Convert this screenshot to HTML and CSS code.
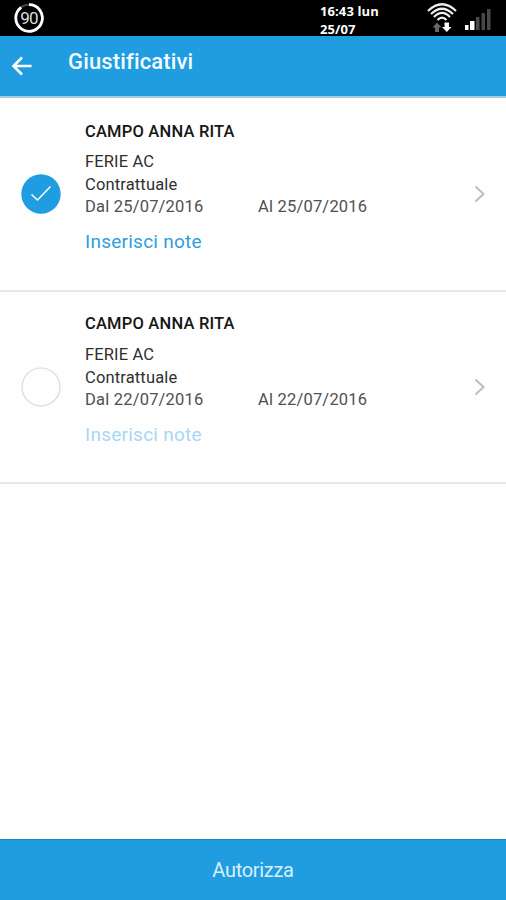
FILE: index.html
```html
<!DOCTYPE html>
<html lang="it">
<head>
<meta charset="utf-8">
<title>Giustificativi</title>
<link rel="stylesheet" href="styles.css">
</head>
<body>
<div class="status">
  <div class="battery">
    <svg width="32" height="36" viewBox="0 0 32 36" fill="none"><circle cx="16" cy="18" r="13.3" stroke="#444" stroke-width="2"/><path d="M16 4.7A13.3 13.3 0 1 1 8.2 7.3" stroke="#fff" stroke-width="2.8"/></svg>
    <span class="level">90</span>
  </div>
  <div class="clock">16:43 lun<br>25/07</div>
  <svg class="wifi" width="32" height="36" viewBox="0 0 32 36" fill="none"><g stroke="#eee" stroke-width="2.2"><path d="M2 11Q16-2.500 30 11"/><path d="M5 14Q16 3.500 27 14"/><path d="M8 17Q16 9 24 17"/><path d="M11.500 20Q16 15.500 20.500 20"/></g><path d="M11 22.500l4.500 5H13V32H9v-4.500H6.500z" fill="#666"/><path d="M18.500 22.500h4.500v4.500h2.500L20.800 32 16 27h2.500z" fill="#fff"/></svg>
  <svg class="signal" width="28" height="36" viewBox="0 0 28 36"><path d="M1 25h3.500v5H1zM6 21h4.500v9H6z" fill="#fff"/><path d="M12 17h3.500v13H12zM17.500 13H21v17h-3.500zM23 9h3.500v21H23z" fill="#484848"/></svg>
</div>
<header class="header">
  <svg class="back" width="22" height="22" viewBox="0 0 22 22" fill="none" stroke="#fff" stroke-width="2.600"><path d="M20.500 11H2.500M11 2.500L2.500 11l8.500 8.500"/></svg>
  <h1 class="title">Giustificativi</h1>
</header>
<main class="list">
  <section class="row">
    <svg class="check" width="40" height="40" viewBox="0 0 40 40" fill="none"><circle cx="20" cy="20" r="19.700" fill="#1f9de0"/><path d="M10.500 20.500L16.500 26 29.500 12.500" stroke="#fff" stroke-width="1.500"/></svg>
    <div class="info">
      <div class="name">CAMPO ANNA RITA</div>
      <div class="line type">FERIE AC</div>
      <div class="line kind">Contrattuale</div>
      <div class="line dates"><span class="from">Dal 25/07/2016</span><span>Al 25/07/2016</span></div>
      <div class="note">Inserisci note</div>
    </div>
    <svg class="chevron" width="12" height="18" viewBox="0 0 12 18" fill="none" stroke="#bdbdbd" stroke-width="2"><path d="M1.500 1.500L9.500 9l-8 7.500"/></svg>
  </section>
  <section class="row last">
    <svg class="check" width="40" height="40" viewBox="0 0 40 40" fill="none"><circle cx="20" cy="20" r="19" stroke="#d9d9d9" stroke-width="1.200"/></svg>
    <div class="info">
      <div class="name">CAMPO ANNA RITA</div>
      <div class="line type">FERIE AC</div>
      <div class="line kind">Contrattuale</div>
      <div class="line dates"><span class="from">Dal 22/07/2016</span><span>Al 22/07/2016</span></div>
      <div class="note disabled">Inserisci note</div>
    </div>
    <svg class="chevron" width="12" height="18" viewBox="0 0 12 18" fill="none" stroke="#bdbdbd" stroke-width="2"><path d="M1.500 1.500L9.500 9l-8 7.500"/></svg>
  </section>
</main>
<footer class="action">Autorizza</footer>
</body>
</html>
```
FILE: styles.css
```css
* { box-sizing: border-box; }
body {
  margin: 0;
  height: 900px;
  display: flex;
  flex-direction: column;
  background: #fefefe;
  font-family: Roboto, "Liberation Sans", sans-serif;
  overflow: hidden;
}
svg { display: block; flex: none; }
.status {
  flex: none;
  height: 36px;
  padding-left: 13px;
  display: flex;
  background: #000;
  color: #fff;
}
.battery { display: grid; width: 32px; margin-right: 275px; }
.battery > * { grid-area: 1 / 1; }
.level {
  place-self: center;
  font-size: 17px;
  letter-spacing: -0.8px;
  color: #ddd;
}
.clock {
  width: 106px;
  padding-top: 2px;
  font: 700 13px/18px "Open Sans", sans-serif;
  letter-spacing: 0.1px;
}
.signal { margin-left: 6px; }
.header {
  flex: none;
  height: 62px;
  padding: 0 11px;
  display: flex;
  background: #1f9de0;
  border-bottom: 2px solid #a5cce5;
}
.back { margin-top: 19px; }
.title {
  margin: 11px 0 0 35px;
  font-size: 22px;
  line-height: 30px;
  font-weight: 500;
  letter-spacing: 0.15px;
  color: #f4fbff;
}
.list { flex: 1; }
.row {
  height: 194px;
  padding: 0 20px 0 21px;
  display: flex;
  align-items: center;
  border-bottom: 2px solid #e9e9e9;
}
.last { height: 192px; }
.info { flex: 1; margin-left: 24px; align-self: flex-start; padding-top: 23px; }
.last .info { padding-top: 21px; }
.name {
  font-size: 16.5px;
  line-height: 22px;
  font-weight: 500;
  letter-spacing: 0.2px;
  color: #161616;
}
.line {
  font-size: 16.5px;
  line-height: 22.5px;
  letter-spacing: 0.15px;
  color: #303030;
}
.type { margin-top: 8px; }
.last .type { margin-top: 9px; }
.dates { display: flex; color: #505050; letter-spacing: 0.2px; }
.from { width: 173px; }
.note {
  margin-top: 11px;
  font-size: 19px;
  line-height: 24px;
  letter-spacing: 0.25px;
  color: #2e9fdc;
}
.disabled { color: #a7d8f3; }
.action {
  flex: none;
  height: 61px;
  border-top: 1px solid #1787c4;
  display: flex;
  align-items: center;
  justify-content: center;
  background: #1f9de0;
  color: #d8effb;
  font-size: 20px;
  letter-spacing: -0.3px;
}
```
